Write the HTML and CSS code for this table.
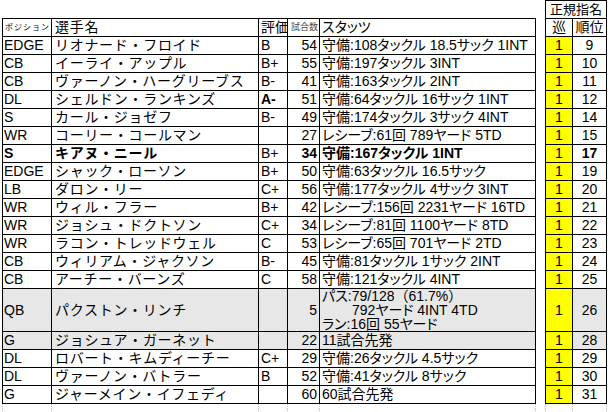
FILE: index.html
```html
<!DOCTYPE html>
<html lang="ja">
<head>
<meta charset="utf-8">
<title>ドラフト指名選手</title>
<link rel="stylesheet" href="styles.css">
</head>
<body>
<div class="sheet">
  <div class="roster">
    <div class="row head">
      <div class="cell pos h-pos">ポジション</div>
      <div class="cell name h-name">選手名</div>
      <div class="cell grade h-grade">評価</div>
      <div class="cell h-games">試合数</div>
      <div class="cell stats h-stats">スタッツ</div>
    </div>
    <div class="row"><div class="cell pos">EDGE</div><div class="cell name">リオナード・フロイド</div><div class="cell grade">B</div><div class="cell num">54</div><div class="cell stats">守備:108タックル 18.5サック 1INT</div></div>
    <div class="row"><div class="cell pos">CB</div><div class="cell name">イーライ・アップル</div><div class="cell grade">B+</div><div class="cell num">55</div><div class="cell stats">守備:197タックル 3INT</div></div>
    <div class="row"><div class="cell pos">CB</div><div class="cell name">ヴァーノン・ハーグリーブス</div><div class="cell grade">B-</div><div class="cell num">41</div><div class="cell stats">守備:163タックル 2INT</div></div>
    <div class="row"><div class="cell pos">DL</div><div class="cell name">シェルドン・ランキンズ</div><div class="cell grade strong">A-</div><div class="cell num">51</div><div class="cell stats">守備:64タックル 16サック 1INT</div></div>
    <div class="row"><div class="cell pos">S</div><div class="cell name">カール・ジョゼフ</div><div class="cell grade">B-</div><div class="cell num">49</div><div class="cell stats">守備:174タックル 3サック 4INT</div></div>
    <div class="row"><div class="cell pos">WR</div><div class="cell name">コーリー・コールマン</div><div class="cell grade"></div><div class="cell num">27</div><div class="cell stats">レシーブ:61回 789ヤード 5TD</div></div>
    <div class="row bold"><div class="cell pos">S</div><div class="cell name">キアヌ・ニール</div><div class="cell grade normal">B+</div><div class="cell num">34</div><div class="cell stats">守備:167タックル 1INT</div></div>
    <div class="row"><div class="cell pos">EDGE</div><div class="cell name">シャック・ローソン</div><div class="cell grade">B+</div><div class="cell num">50</div><div class="cell stats">守備:63タックル 16.5サック</div></div>
    <div class="row"><div class="cell pos">LB</div><div class="cell name">ダロン・リー</div><div class="cell grade">C+</div><div class="cell num">56</div><div class="cell stats">守備:177タックル 4サック 3INT</div></div>
    <div class="row"><div class="cell pos">WR</div><div class="cell name">ウィル・フラー</div><div class="cell grade">B+</div><div class="cell num">42</div><div class="cell stats">レシーブ:156回 2231ヤード 16TD</div></div>
    <div class="row"><div class="cell pos">WR</div><div class="cell name">ジョシュ・ドクトソン</div><div class="cell grade">C+</div><div class="cell num">34</div><div class="cell stats">レシーブ:81回 1100ヤード 8TD</div></div>
    <div class="row"><div class="cell pos">WR</div><div class="cell name">ラコン・トレッドウェル</div><div class="cell grade">C</div><div class="cell num">53</div><div class="cell stats">レシーブ:65回 701ヤード 2TD</div></div>
    <div class="row"><div class="cell pos">CB</div><div class="cell name">ウィリアム・ジャクソン</div><div class="cell grade">B-</div><div class="cell num">45</div><div class="cell stats">守備:81タックル 1サック 2INT</div></div>
    <div class="row"><div class="cell pos">CB</div><div class="cell name">アーチー・バーンズ</div><div class="cell grade">C</div><div class="cell num">58</div><div class="cell stats">守備:121タックル 4INT</div></div>
    <div class="row tall shaded"><div class="cell pos">QB</div><div class="cell name">パクストン・リンチ</div><div class="cell grade"></div><div class="cell num">5</div><div class="cell stats stack"><span>パス:79/128<span class="wide">（61.7%）</span></span><span class="indent">792ヤード 4INT 4TD</span><span>ラン:16回 55ヤード</span></div></div>
    <div class="row shaded"><div class="cell pos">G</div><div class="cell name">ジョシュア・ガーネット</div><div class="cell grade"></div><div class="cell num">22</div><div class="cell stats">11試合先発</div></div>
    <div class="row"><div class="cell pos">DL</div><div class="cell name">ロバート・キムディーチー</div><div class="cell grade">C+</div><div class="cell num">29</div><div class="cell stats">守備:26タックル 4.5サック</div></div>
    <div class="row"><div class="cell pos">DL</div><div class="cell name">ヴァーノン・バトラー</div><div class="cell grade">B</div><div class="cell num">52</div><div class="cell stats">守備:41タックル 8サック</div></div>
    <div class="row"><div class="cell pos">G</div><div class="cell name">ジャーメイン・イフェディ</div><div class="cell grade"></div><div class="cell num">60</div><div class="cell stats">60試合先発</div></div>
    <div class="row filler"><div class="cell"></div><div class="cell"></div><div class="cell"></div><div class="cell"></div><div class="cell"></div></div>
  </div>

  <div class="draft">
    <div class="row"><div class="cell ctr span">正規指名</div></div>
    <div class="row"><div class="cell ctr">巡</div><div class="cell ctr">順位</div></div>
    <div class="row"><div class="cell ctr round">1</div><div class="cell ctr">9</div></div>
    <div class="row"><div class="cell ctr round">1</div><div class="cell ctr">10</div></div>
    <div class="row"><div class="cell ctr round">1</div><div class="cell ctr">11</div></div>
    <div class="row"><div class="cell ctr round">1</div><div class="cell ctr">12</div></div>
    <div class="row"><div class="cell ctr round">1</div><div class="cell ctr">14</div></div>
    <div class="row"><div class="cell ctr round">1</div><div class="cell ctr">15</div></div>
    <div class="row"><div class="cell ctr round">1</div><div class="cell ctr bold-cell">17</div></div>
    <div class="row"><div class="cell ctr round">1</div><div class="cell ctr">19</div></div>
    <div class="row"><div class="cell ctr round">1</div><div class="cell ctr">20</div></div>
    <div class="row"><div class="cell ctr round">1</div><div class="cell ctr">21</div></div>
    <div class="row"><div class="cell ctr round">1</div><div class="cell ctr">22</div></div>
    <div class="row"><div class="cell ctr round">1</div><div class="cell ctr">23</div></div>
    <div class="row"><div class="cell ctr round">1</div><div class="cell ctr">24</div></div>
    <div class="row"><div class="cell ctr round">1</div><div class="cell ctr">25</div></div>
    <div class="row tall"><div class="cell ctr round">1</div><div class="cell ctr grey">26</div></div>
    <div class="row"><div class="cell ctr round">1</div><div class="cell ctr grey">28</div></div>
    <div class="row"><div class="cell ctr round">1</div><div class="cell ctr">29</div></div>
    <div class="row"><div class="cell ctr round">1</div><div class="cell ctr">30</div></div>
    <div class="row"><div class="cell ctr round">1</div><div class="cell ctr">31</div></div>
    <div class="row filler"><div class="cell"></div><div class="cell"></div></div>
  </div>
</div>
</body>
</html>
```

FILE: styles.css
```css
html, body {
  margin: 0;
  background: #ffffff;
}

body {
  font-family: "Liberation Sans", "Noto Sans CJK JP", sans-serif;
  font-size: 14px;
  color: #000000;
}

.sheet {
  display: flex;
  align-items: flex-start;
  padding-left: 2px;
}

.roster {
  margin-top: 18px;
  border-top: 1px solid #000;
}

.draft {
  margin-left: 9px;
  border-top: 1px solid #000;
}

.row {
  display: grid;
  height: 18px;
  border-left: 1px solid #000;
}

.roster .row {
  grid-template-columns: 49px 207px 29px 32px 216px;
}

.draft .row {
  grid-template-columns: 27px 34px;
}

.row.tall {
  height: 43px;
}

.cell {
  display: flex;
  align-items: center;
  border-right: 1px solid #000;
  border-bottom: 1px solid #000;
  line-height: 17px;
  padding: 0 2px;
  white-space: nowrap;
  overflow: hidden;
}

.pos {
  padding-left: 1px;
}

.name {
  padding-left: 3px;
  letter-spacing: 0.7px;
}

.grade {
  padding-left: 2px;
}

.strong {
  font-weight: bold;
}

.num {
  justify-content: flex-end;
  padding-right: 2px;
}

.stats {
  padding-left: 2px;
  font-size: 14px;
  font-feature-settings: "palt";
}

.stack {
  flex-direction: column;
  align-items: flex-start;
  justify-content: center;
  line-height: 14px;
}

.stack .indent {
  padding-left: 30px;
}

.stack .wide {
  font-feature-settings: normal;
}

.h-pos {
  font-size: 8px;
  letter-spacing: 1px;
  padding-left: 2px;
}

.h-games {
  font-size: 9px;
  color: #444;
  padding-left: 3px;
}

.bold .cell {
  font-weight: bold;
}

.bold .cell.normal {
  font-weight: normal;
}

.bold-cell {
  font-weight: bold;
}

.shaded .cell {
  background: #e7e7e7;
}

.ctr {
  justify-content: center;
  padding: 0;
}

.span {
  grid-column: 1 / -1;
  font-size: 13px;
}

.round {
  background: #ffff00;
}

.grey {
  background: #e7e7e7;
}

.row.filler {
  height: 9px;
  border-left: 1px dotted #b8b8b8;
}

.row.filler .cell {
  border-bottom: none;
  border-right: 1px dotted #b8b8b8;
}
```
